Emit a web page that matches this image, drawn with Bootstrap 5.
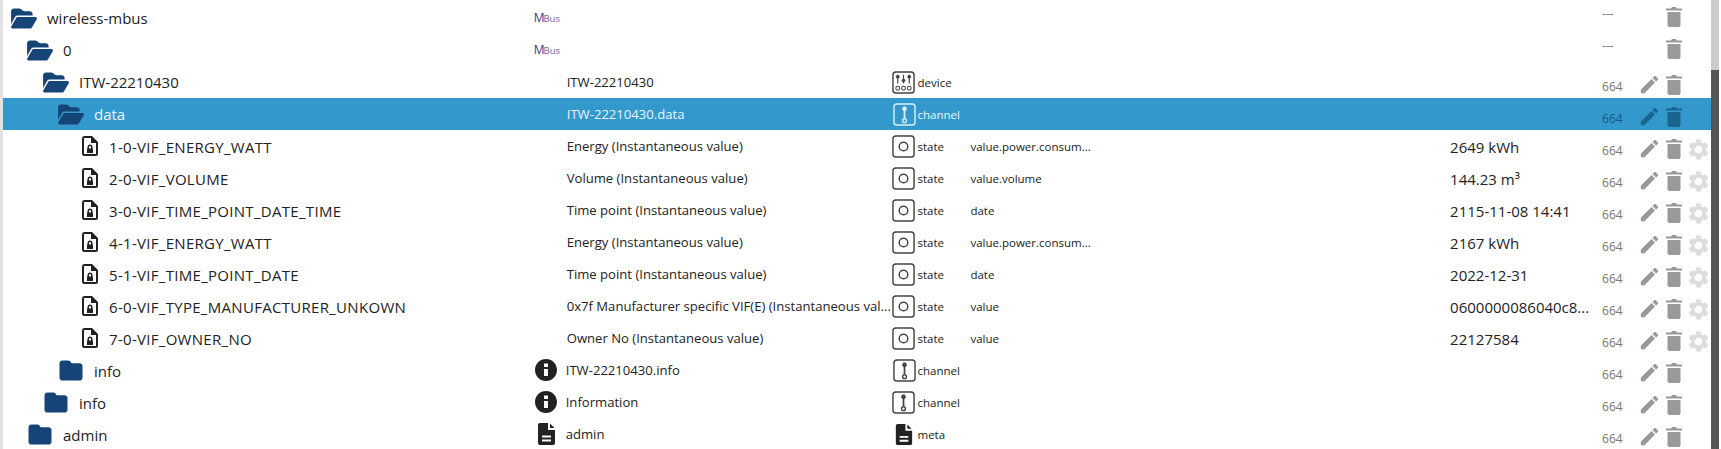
<!DOCTYPE html>
<html lang="en">
<head>
<meta charset="UTF-8">
<meta name="viewport" content="width=device-width, initial-scale=1.0">
<title>Objects</title>
<link rel="stylesheet" href="https://cdn.jsdelivr.net/npm/bootstrap@5.3.0/dist/css/bootstrap.min.css">
<style>
    html, body { height: 100%; overflow: hidden; }
    body { font-family: "Open Sans", "Noto Sans", sans-serif; color: #222; background: #fff; }
    .page { height: 449px; }
    .tree { width: 1711px; padding-top: 2px; border-left: 3px solid #e2e2e2; }
    .scroller { width: 8px; background: #555; }
    .scroller-thumb { height: 70px; background: #ccc; }
    .obj-row { height: 32px; }
    .obj-row.selected { background: #3399cc; color: #eaf5fb; }
    .col-id { width: 530px; font-size: 15px; }
    .col-name { width: 360px; font-size: 13.1px; white-space: nowrap; }
    .col-type { width: 78px; font-size: 11.5px; }
    .col-role { width: 480px; font-size: 11.5px; white-space: nowrap; }
    .col-val { width: 152px; font-size: 15px; white-space: nowrap; }
    .col-act { width: 109px; }
    .txt { padding-top: 2px; }
    .caps { letter-spacing: .3px; }
    .lvl-0 { padding-left: 8px; }
    .lvl-1 { padding-left: 24px; }
    .lvl-2 { padding-left: 40px; }
    .lvl-3 { padding-left: 55px; }
    .lvl-4 { padding-left: 79px; }
    .ico-folder { width: 26px; height: 23px; fill: #164477; margin-right: 10px; flex: none; }
    .ico-file { width: 16px; height: 20px; fill: #222; margin-right: 11px; flex: none; }
    .ico-name { width: 24px; height: 24px; fill: #222; margin-left: 1px; margin-right: 8px; flex: none; }
    .ico-type { width: 23px; height: 23px; margin-right: 2px; flex: none; fill: none; stroke: #444; color: #444; }
    .selected .ico-type { stroke: #d8f0fb; color: #d8f0fb; }
    .ico-meta { fill: #222; stroke: none; }
    .mbus-logo { width: 33px; margin-left: 1px; color: #43348a; font-size: 12px; letter-spacing: -1px; line-height: 14px; flex: none; }
    .mbus-logo i { font-style: normal; font-size: 9.5px; letter-spacing: 0; color: #6f65a6; }
    .perm { width: 36px; font-size: 12px; color: #777; padding-top: 10px; flex: none; }
    .perm.none { padding-top: 0; padding-bottom: 9px; line-height: 1; }
    .selected .perm { color: #165a85; }
    .act { fill: #999; flex: none; }
    .act-edit { width: 23px; height: 23px; margin-right: 1px; margin-top: 5px; }
    .act-del { width: 24px; height: 24px; margin-top: 6px; }
    .act-del.up { margin-top: -2px; }
    .act-gear { width: 25px; height: 25px; fill: #ddd; margin-top: 6px; }
    .selected .act { fill: #1a6590; }
    .gap-edit { width: 24px; flex: none; }
</style>
</head>
<body>
<svg width="0" height="0" class="position-absolute">
    <symbol id="i-open" viewBox="0 0 576 512"><path d="M88.7 223.8L0 375.8V96C0 60.7 28.7 32 64 32H181.5c17 0 33.3 6.7 45.3 18.7l26.5 26.5c12 12 28.3 18.7 45.3 18.7H416c35.3 0 64 28.7 64 64v32H144c-22.8 0-43.8 12.1-55.3 31.8zm27.6 16.1C122.1 230 132.6 224 144 224H544c11.5 0 22 6.1 27.7 16.1s5.7 22.2-.1 32.1l-112 192C453.9 474 443.4 480 432 480H32c-11.5 0-22-6.1-27.7-16.1s-5.7-22.2 .1-32.1l112-192z"/></symbol>
    <symbol id="i-folder" viewBox="0 0 512 512"><path d="M64 480H448c35.3 0 64-28.7 64-64V160c0-35.3-28.7-64-64-64H288c-10.1 0-19.6-4.7-25.6-12.8L243.2 57.6C231.1 41.5 212.1 32 192 32H64C28.7 32 0 60.7 0 96V416c0 35.3 28.7 64 64 64z"/></symbol>
    <symbol id="i-file" viewBox="0 0 16 20"><path fill-rule="evenodd" d="M2.5 0H10l6 6v11.5A2.5 2.5 0 0 1 13.500 20h-11A2.500 2.500 0 0 1 0 17.500v-15A2.500 2.500 0 0 1 2.500 0zM2 2v16h12V7H9V2zM8 8.500a2.500 2.500 0 0 1 2.500 2.500v1.500h.5v4.500H5v-4.500h.5V11A2.500 2.500 0 0 1 8 8.500zM8 10a1 1 0 0 0-1 1v1.500h2V11a1 1 0 0 0-1-1z"/></symbol>
    <symbol id="i-info" viewBox="0 0 24 24"><path d="M12 1C5.900 1 1 5.900 1 12s4.900 11 11 11 11-4.900 11-11S18.100 1 12 1zm2 17h-4v-7h4v7zm0-9h-4V5.500h4V9z"/></symbol>
    <symbol id="i-doc" viewBox="0 0 24 24"><path d="M6 1h8v7h7v13a2 2 0 0 1-2 2H6a2 2 0 0 1-2-2V3a2 2 0 0 1 2-2zm10 .500L20.500 6H16zM8 13.500v2h9v-2zm0 4v2h9v-2z" fill-rule="evenodd"/></symbol>
    <symbol id="i-device" viewBox="0 0 24 24"><rect x="1" y="1" width="22" height="22" rx="3" stroke-width="1.500"/><path d="M6 4v9M12 4v9M18 4v9" stroke-width="1.200"/><circle cx="6" cy="6" r="1.500" fill="currentColor"/><circle cx="12" cy="10" r="1.500" fill="currentColor"/><circle cx="18" cy="6" r="1.500" fill="currentColor"/><circle cx="6" cy="18" r="2" stroke-width="1.100"/><circle cx="12" cy="18" r="2" stroke-width="1.100"/><circle cx="18" cy="18" r="2" stroke-width="1.100"/></symbol>
    <symbol id="i-channel" viewBox="0 0 24 24"><rect x="1" y="1" width="22" height="22" rx="3" stroke-width="1.500"/><path d="M12 7v9" stroke-width="1.800"/><circle cx="12" cy="6" r="2" fill="currentColor" stroke-width="1"/><circle cx="12" cy="18.500" r="2" stroke-width="1.500"/></symbol>
    <symbol id="i-state" viewBox="0 0 24 24"><rect x="1" y="1" width="22" height="22" rx="3" stroke-width="1.500"/><circle cx="12" cy="12" r="4.500" stroke-width="1.500"/></symbol>
    <symbol id="i-edit" viewBox="0 0 24 24"><path d="M3 17.250V21h3.750L17.810 9.940l-3.750-3.750L3 17.250zM20.710 7.040c.39-.39.39-1.020 0-1.410l-2.340-2.340a.9959.9959 0 0 0-1.410 0l-1.830 1.830 3.750 3.750 1.830-1.830z"/></symbol>
    <symbol id="i-del" viewBox="0 0 24 24"><path d="M5.500 7h13v13a2 2 0 0 1-2 2h-9a2 2 0 0 1-2-2zM4 3.500h5l1-1.500h4l1 1.500h5V5.500H4z"/></symbol>
    <symbol id="i-gear" viewBox="0 0 24 24"><path d="M19.140 12.940c.04-.3.060-.61.060-.94 0-.32-.02-.64-.07-.94l2.030-1.580c.18-.14.230-.41.120-.61l-1.920-3.320c-.12-.22-.37-.29-.59-.22l-2.390.96c-.5-.38-1.030-.7-1.620-.94l-.36-2.540c-.04-.24-.24-.41-.48-.41h-3.840c-.24 0-.43.170-.47.410l-.36 2.540c-.59.240-1.130.570-1.620.940l-2.390-.96c-.22-.08-.47 0-.59.220L2.740 8.870c-.12.210-.08.470.120.610l2.030 1.580c-.05.3-.09.630-.09.940s.02.640.070.940l-2.030 1.580c-.18.140-.23.410-.12.610l1.920 3.320c.12.220.37.290.59.220l2.390-.96c.5.380 1.030.7 1.620.94l.36 2.540c.05.240.24.410.48.410h3.840c.24 0 .44-.17.47-.41l.36-2.540c.59-.24 1.130-.56 1.620-.94l2.390.96c.22.080.47 0 .59-.22l1.920-3.320c.12-.22.070-.47-.12-.61l-2.010-1.580zM12 15.600c-1.980 0-3.600-1.620-3.600-3.600s1.620-3.600 3.600-3.600 3.600 1.620 3.600 3.600-1.620 3.600-3.600 3.600z"/></symbol>
</svg>

<div class="page d-flex overflow-hidden">
<div class="tree flex-shrink-0">
    <div id="rows"></div>
</div>
<div class="scroller flex-shrink-0"><div class="scroller-thumb"></div></div>
</div>

<script>
const use = (id, cls) => `<svg class="${cls}"><use href="#${id}"/></svg>`;
const mbus = '<span class="mbus-logo">M<i>Bus</i></span>';

const rows = [
    { lvl: 0, icon: "open", id: "wireless-mbus", logo: mbus, perm: "---" },
    { lvl: 1, icon: "open", id: "0", logo: mbus, perm: "---" },
    { lvl: 2, icon: "open", id: "ITW-22210430", name: "ITW-22210430", type: "device", perm: "664" },
    { lvl: 3, icon: "open", id: "data", name: "ITW-22210430.data", type: "channel", perm: "664", selected: true },
    { lvl: 4, icon: "file", id: "1-0-VIF_ENERGY_WATT", name: "Energy (Instantaneous value)", type: "state", role: "value.power.consum...", val: "2649 kWh", perm: "664" },
    { lvl: 4, icon: "file", id: "2-0-VIF_VOLUME", name: "Volume (Instantaneous value)", type: "state", role: "value.volume", val: "144.23 m³", perm: "664" },
    { lvl: 4, icon: "file", id: "3-0-VIF_TIME_POINT_DATE_TIME", name: "Time point (Instantaneous value)", type: "state", role: "date", val: "2115-11-08 14:41", perm: "664" },
    { lvl: 4, icon: "file", id: "4-1-VIF_ENERGY_WATT", name: "Energy (Instantaneous value)", type: "state", role: "value.power.consum...", val: "2167 kWh", perm: "664" },
    { lvl: 4, icon: "file", id: "5-1-VIF_TIME_POINT_DATE", name: "Time point (Instantaneous value)", type: "state", role: "date", val: "2022-12-31", perm: "664" },
    { lvl: 4, icon: "file", id: "6-0-VIF_TYPE_MANUFACTURER_UNKOWN", name: "0x7f Manufacturer specific VIF(E) (Instantaneous val...", type: "state", role: "value", val: "0600000086040c8...", perm: "664" },
    { lvl: 4, icon: "file", id: "7-0-VIF_OWNER_NO", name: "Owner No (Instantaneous value)", type: "state", role: "value", val: "22127584", perm: "664" },
    { lvl: 3, icon: "folder", id: "info", logo: use("i-info", "ico-name"), name: "ITW-22210430.info", type: "channel", perm: "664" },
    { lvl: 2, icon: "folder", id: "info", logo: use("i-info", "ico-name"), name: "Information", type: "channel", perm: "664" },
    { lvl: 1, icon: "folder", id: "admin", logo: use("i-doc", "ico-name"), name: "admin", type: "meta", perm: "664" },
];

document.getElementById("rows").innerHTML = rows.map(r => {
    const isFile = r.icon === "file";
    const treeIcon = isFile ? use("i-file", "ico-file")
        : use(r.icon === "open" ? "i-open" : "i-folder", "ico-folder");
    const typeIcon = r.type === "meta" ? use("i-doc", "ico-type ico-meta")
        : r.type ? use("i-" + r.type, "ico-type") : "";
    const locked = r.perm === "---";
    const idClass = (r.icon === "open" ? "" : "txt") + (isFile ? " caps" : "");
    return `<div class="obj-row d-flex align-items-center${r.selected ? " selected" : ""}">
        <div class="col-id lvl-${r.lvl} d-flex align-items-center">${treeIcon}<span class="${idClass}">${r.id}</span></div>
        <div class="col-name d-flex align-items-center">${r.logo || '<span class="mbus-logo"></span>'}<span class="txt">${r.name || ""}</span></div>
        <div class="col-type d-flex align-items-center">${typeIcon}<span class="txt">${r.type || ""}</span></div>
        <div class="col-role txt">${r.role || ""}</div>
        <div class="col-val txt">${r.val || ""}</div>
        <div class="col-act d-flex align-items-center">
            <span class="perm${locked ? " none" : ""}">${r.perm}</span>
            ${locked ? '<span class="gap-edit"></span>' : use("i-edit", "act act-edit")}
            ${use("i-del", "act act-del" + (locked ? " up" : ""))}
            ${isFile ? use("i-gear", "act act-gear") : ""}
        </div>
    </div>`;
}).join("");
</script>
<script src="https://cdn.jsdelivr.net/npm/bootstrap@5.3.0/dist/js/bootstrap.bundle.min.js"></script>
</body>
</html>
